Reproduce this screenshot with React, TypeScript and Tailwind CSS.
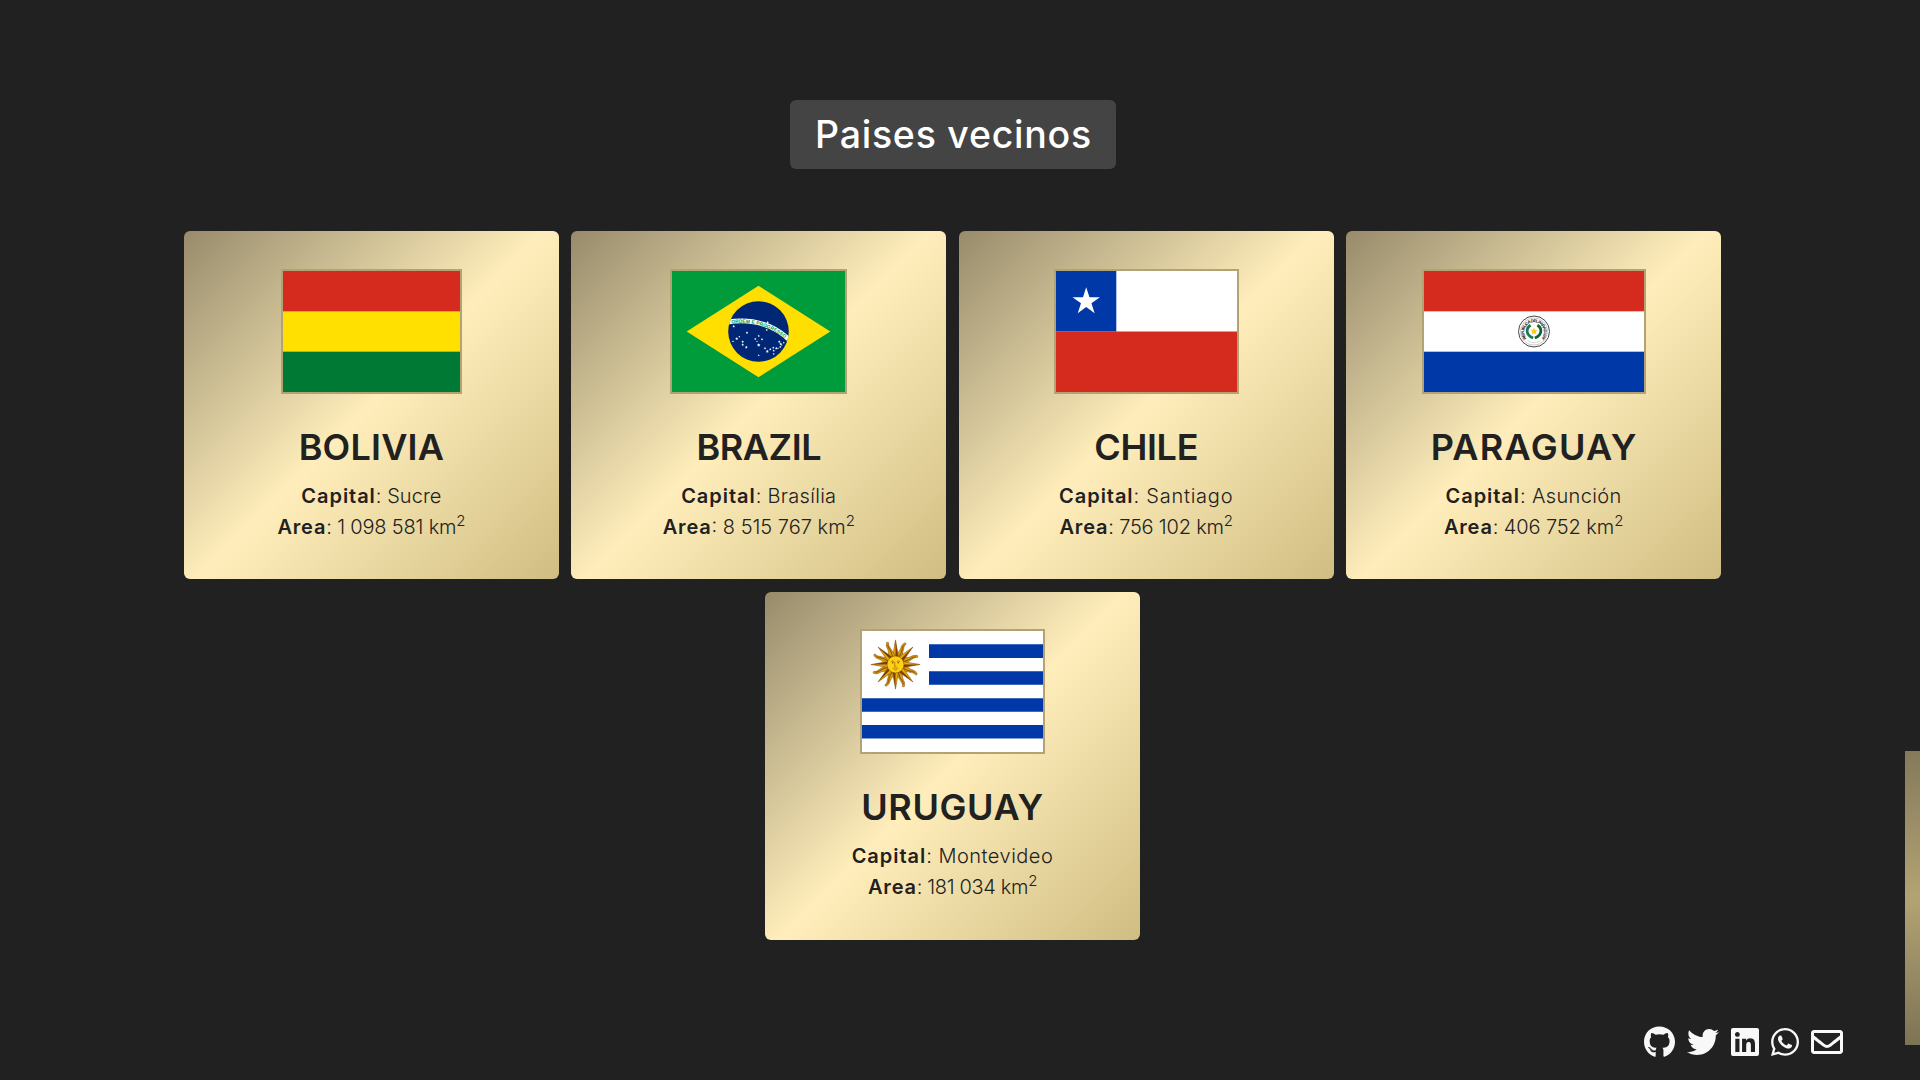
import React from "react";
import { FaGithub, FaTwitter, FaLinkedin, FaWhatsapp, FaRegEnvelope } from "react-icons/fa";

const RED = "#d52b1e";
const BLUE = "#0038a8";

function starPoints(cx: number, cy: number, r: number, inner = 0.382) {
  return Array.from({ length: 10 }, (_, i) => {
    const a = (i * Math.PI) / 5 - Math.PI / 2;
    const d = i % 2 === 0 ? r : r * inner;
    return `${(cx + d * Math.cos(a)).toFixed(2)},${(cy + d * Math.sin(a)).toFixed(2)}`;
  }).join(" ");
}

function BoliviaFlag() {
  return (
    <svg className="block" width="177" height="121" viewBox="0 0 177 121">
      <rect width="177" height="121" fill="#007934" />
      <rect width="177" height="80.67" fill="#ffe000" />
      <rect width="177" height="40.33" fill={RED} />
    </svg>
  );
}

const brazilStars: [number, number, number][] = [
  [61.7, 55.3, 0.9], [94.7, 59, 0.8], [95.7, 51.3, 0.8], [75, 61.7, 0.9], [67.3, 65.7, 0.7],
  [64.7, 67.7, 1], [61, 70.3, 0.7], [70.7, 70.7, 0.9], [70.7, 73.7, 0.9], [74.3, 76.3, 1],
  [86.7, 65, 0.8], [83.3, 68, 0.8], [90, 68.3, 0.8], [85, 70.3, 0.6], [86.7, 74, 1.2],
  [86.7, 84.3, 0.7], [93, 77.3, 0.8], [95.3, 80.3, 1.1], [98.3, 78.3, 0.8], [101.3, 76.7, 0.8],
  [101.7, 79.7, 0.8], [101.7, 83, 0.7], [104.3, 77.3, 0.9], [106, 77.3, 0.6], [107.3, 70.7, 0.9],
  [108.7, 73, 1], [108.3, 76, 0.8], [111.7, 71.7, 0.7], [109.7, 74, 0.6],
];

function BrazilFlag() {
  return (
    <svg className="block" width="173" height="121" viewBox="0 0 173 121">
      <defs>
        <clipPath id="globe">
          <circle cx="86.5" cy="60.5" r="30.3" />
        </clipPath>
        <path id="motto" d="M0 121a69.2 69.2 0 0 1 138.4 0" />
      </defs>
      <rect width="173" height="121" fill="#009b3a" />
      <path d="M14.7 60.5 86.5 14.7l71.8 45.8-71.8 45.8z" fill="#fedf00" />
      <circle cx="86.5" cy="60.5" r="30.3" fill="#002776" />
      <g clipPath="url(#globe)">
        <circle cx="69.2" cy="121" r="71.1" fill="none" stroke="#fff" strokeWidth="4.8" />
        <text fill="#009b3a" fontSize="4.9" fontWeight="700" fontFamily="Liberation Sans, sans-serif">
          <textPath href="#motto" startOffset="98.6" textLength="57">ORDEM E PROGRESSO</textPath>
        </text>
      </g>
      {brazilStars.map(([x, y, r]) => (
        <polygon key={`${x}-${y}`} points={starPoints(x, y, r * 1.5, 0.5)} fill="#fff" />
      ))}
    </svg>
  );
}

function ChileFlag() {
  return (
    <svg className="block" width="181" height="121" viewBox="0 0 181 121">
      <rect width="181" height="121" fill={RED} />
      <rect width="181" height="60.5" fill="#fff" />
      <rect width="60.3" height="60.5" fill={BLUE} />
      <polygon points={starPoints(30.2, 30.6, 14.4)} fill="#fff" />
    </svg>
  );
}

function ParaguayFlag() {
  return (
    <svg className="block" width="220" height="121" viewBox="0 0 220 121">
      <defs>
        <path id="republica" d="M102.6 67.4a9.8 9.8 0 1 1 14.8 0" />
      </defs>
      <rect width="220" height="121" fill={BLUE} />
      <rect width="220" height="80.67" fill="#fff" />
      <rect width="220" height="40.33" fill={RED} />
      <circle cx="110" cy="60.5" r="15.5" fill="#fff" stroke="#333" strokeWidth="0.9" />
      <circle cx="110" cy="60.5" r="13.6" fill="none" stroke="#a9a9a9" strokeWidth="0.6" />
      <text fill="#111" fontSize="4.2" fontWeight="700" fontFamily="Liberation Sans, sans-serif">
        <textPath href="#republica" textLength="45">REPUBLICA DEL PARAGUAY</textPath>
      </text>
      <path d="M106.6 54.2c-5 2.800-5 10.200 2.600 12.800" fill="none" stroke="#1b7a4b" strokeWidth="2.8" />
      <path d="M113.4 54.2c5 2.800 5 10.200-2.600 12.800" fill="none" stroke="#12603a" strokeWidth="2.8" />
      <path d="M103.5 69.5q6.5 4.6 13 0" fill="none" stroke="#cfcfcf" strokeWidth="0.8" />
      <polygon points={starPoints(110, 60.4, 3.5, 0.45)} fill="#fbc811" stroke="#e0ad00" strokeWidth="0.2" />
    </svg>
  );
}

function UruguayFlag() {
  return (
    <svg className="block" width="181" height="121" viewBox="0 0 181 121">
      <rect width="181" height="121" fill="#fff" />
      <path
        d="M67 13.3h114v13.6H67zM67 40.2h114v13.6H67zM0 67.2h181v13.500H0zM0 94.1h181v13.500H0z"
        fill={BLUE}
      />
      <g transform="translate(33.5 33.5)">
        {Array.from({ length: 8 }, (_, i) => (
          <g key={i} transform={`rotate(${i * 45})`}>
            <g transform="rotate(22.5)">
              <path
                d="M-2.8-7C-3.6-11-1.2-13.4-1.4-16.6c-.1-2.4-.6-4.4 1.8-7.2 1.6.2 1.8 1 1.4 1.6-1.6 1.6-.2 3.4-.1 5.8C1.8-13 3.6-11.4 2.8-7z"
                fill="#d9a00f"
                stroke="#7b3f00"
                strokeWidth="0.45"
              />
              <path d="M.2-7C.6-12 1.2-13 .2-17c-.4-2-.2-3.4.6-4.6" fill="none" stroke="#7b3f00" strokeWidth="0.8" />
            </g>
            <path d="M-3-7 0-24.6 3-7z" fill="#e3ac10" stroke="#7b3f00" strokeWidth="0.5" />
            <path d="M0-7V-24L2.9-7z" fill="#7b3f00" />
          </g>
        ))}
        <circle r="8.5" fill="#fcd116" stroke="#7b3f00" strokeWidth="0.5" />
        <path
          d="M-4.6-3q1.7-1.3 3.4 0M1.2-3q1.7-1.3 3.4 0M-.6-2.5-1 1.6h2M-2.8 3.8q2.8-1 5.6 0M-1.6 5.3h3.2"
          fill="none"
          stroke="#a5610a"
          strokeWidth="0.7"
        />
        <circle cx="-2.8" cy="-1.7" r="0.8" fill="#7b3f00" />
        <circle cx="2.8" cy="-1.7" r="0.8" fill="#7b3f00" />
      </g>
    </svg>
  );
}

type Country = {
  name: string;
  capital: string;
  area: string;
  flag: React.ReactNode;
  nameClass: string;
  capitalClass: string;
  areaClass: string;
};

const countries: Country[] = [
  {
    name: "BOLIVIA", capital: "Sucre", area: "1 098 581", flag: <BoliviaFlag />,
    nameClass: "tracking-[0.2px]", capitalClass: "tracking-[0.05px]", areaClass: "tracking-[-0.18px]",
  },
  {
    name: "BRAZIL", capital: "Brasília", area: "8 515 767", flag: <BrazilFlag />,
    nameClass: "tracking-[-0.4px]", capitalClass: "tracking-[0.3px]", areaClass: "tracking-[0px]",
  },
  {
    name: "CHILE", capital: "Santiago", area: "756 102", flag: <ChileFlag />,
    nameClass: "tracking-[-0.3px]", capitalClass: "tracking-[0.75px]", areaClass: "tracking-[-0.2px]",
  },
  {
    name: "PARAGUAY", capital: "Asunción", area: "406 752", flag: <ParaguayFlag />,
    nameClass: "tracking-[1.3px] pl-[1.3px]", capitalClass: "tracking-[0.35px]", areaClass: "tracking-[-0.1px]",
  },
  {
    name: "URUGUAY", capital: "Montevideo", area: "181 034", flag: <UruguayFlag />,
    nameClass: "tracking-[0.6px]", capitalClass: "tracking-[0.5px]", areaClass: "tracking-[-0.35px]",
  },
];

function CountryCard({ country }: { country: Country }) {
  return (
    <article className="flex h-[348px] w-[375px] flex-col items-center rounded-md bg-[linear-gradient(135deg,#978b6b_0%,#ffeebb_50%,#cfbd82_100%)] pt-[37.6px] text-[#212121]">
      <div className="border-2 border-[#b3a374]">{country.flag}</div>
      <h2 className={`mt-[25px] text-[36px] leading-[56px] font-semibold ${country.nameClass}`}>{country.name}</h2>
      <div className="mt-[6px] text-center text-[20px] leading-[31px] font-light">
        <p className={country.capitalClass}>
          <b className="font-semibold tracking-[0.95px]">Capital</b>: {country.capital}
        </p>
        <p className={country.areaClass}>
          <b className="font-semibold tracking-[0.8px]">Area</b>: {country.area} km
          <sup className="-top-2 align-baseline text-[15px] leading-none">2</sup>
        </p>
      </div>
    </article>
  );
}

export default function App() {
  return (
    <div className="flex h-[1080px] w-full overflow-hidden bg-[#212121] font-['Inter',sans-serif]">
      <div className="flex flex-1 flex-col items-center">
        <h1 className="mt-[100px] flex h-[69px] w-[326px] items-center justify-center rounded-md bg-[#444444] pl-[2px] text-[37.5px] leading-none font-medium tracking-[0.75px] whitespace-nowrap text-white">
          Paises vecinos
        </h1>
        <section className="mt-[62.2px] flex w-[1540px] flex-wrap justify-center gap-[12.4px]">
          {countries.map((c) => (
            <CountryCard key={c.name} country={c} />
          ))}
        </section>
        <footer className="mt-auto mr-[62px] mb-[22px] flex items-center gap-3 self-end text-[#f8f8f8]">
          <FaGithub className="h-8 w-[31px]" />
          <FaTwitter className="size-8" />
          <FaLinkedin className="h-8 w-7" />
          <FaWhatsapp className="h-8 w-7" />
          <FaRegEnvelope className="size-8" />
        </footer>
      </div>
      <div className="w-[15px] pt-[751px]">
        <div className="h-[294px] bg-[linear-gradient(180deg,#847a5a_0%,#b3a374_50%,#7d7454_100%)]" />
      </div>
    </div>
  );
}
